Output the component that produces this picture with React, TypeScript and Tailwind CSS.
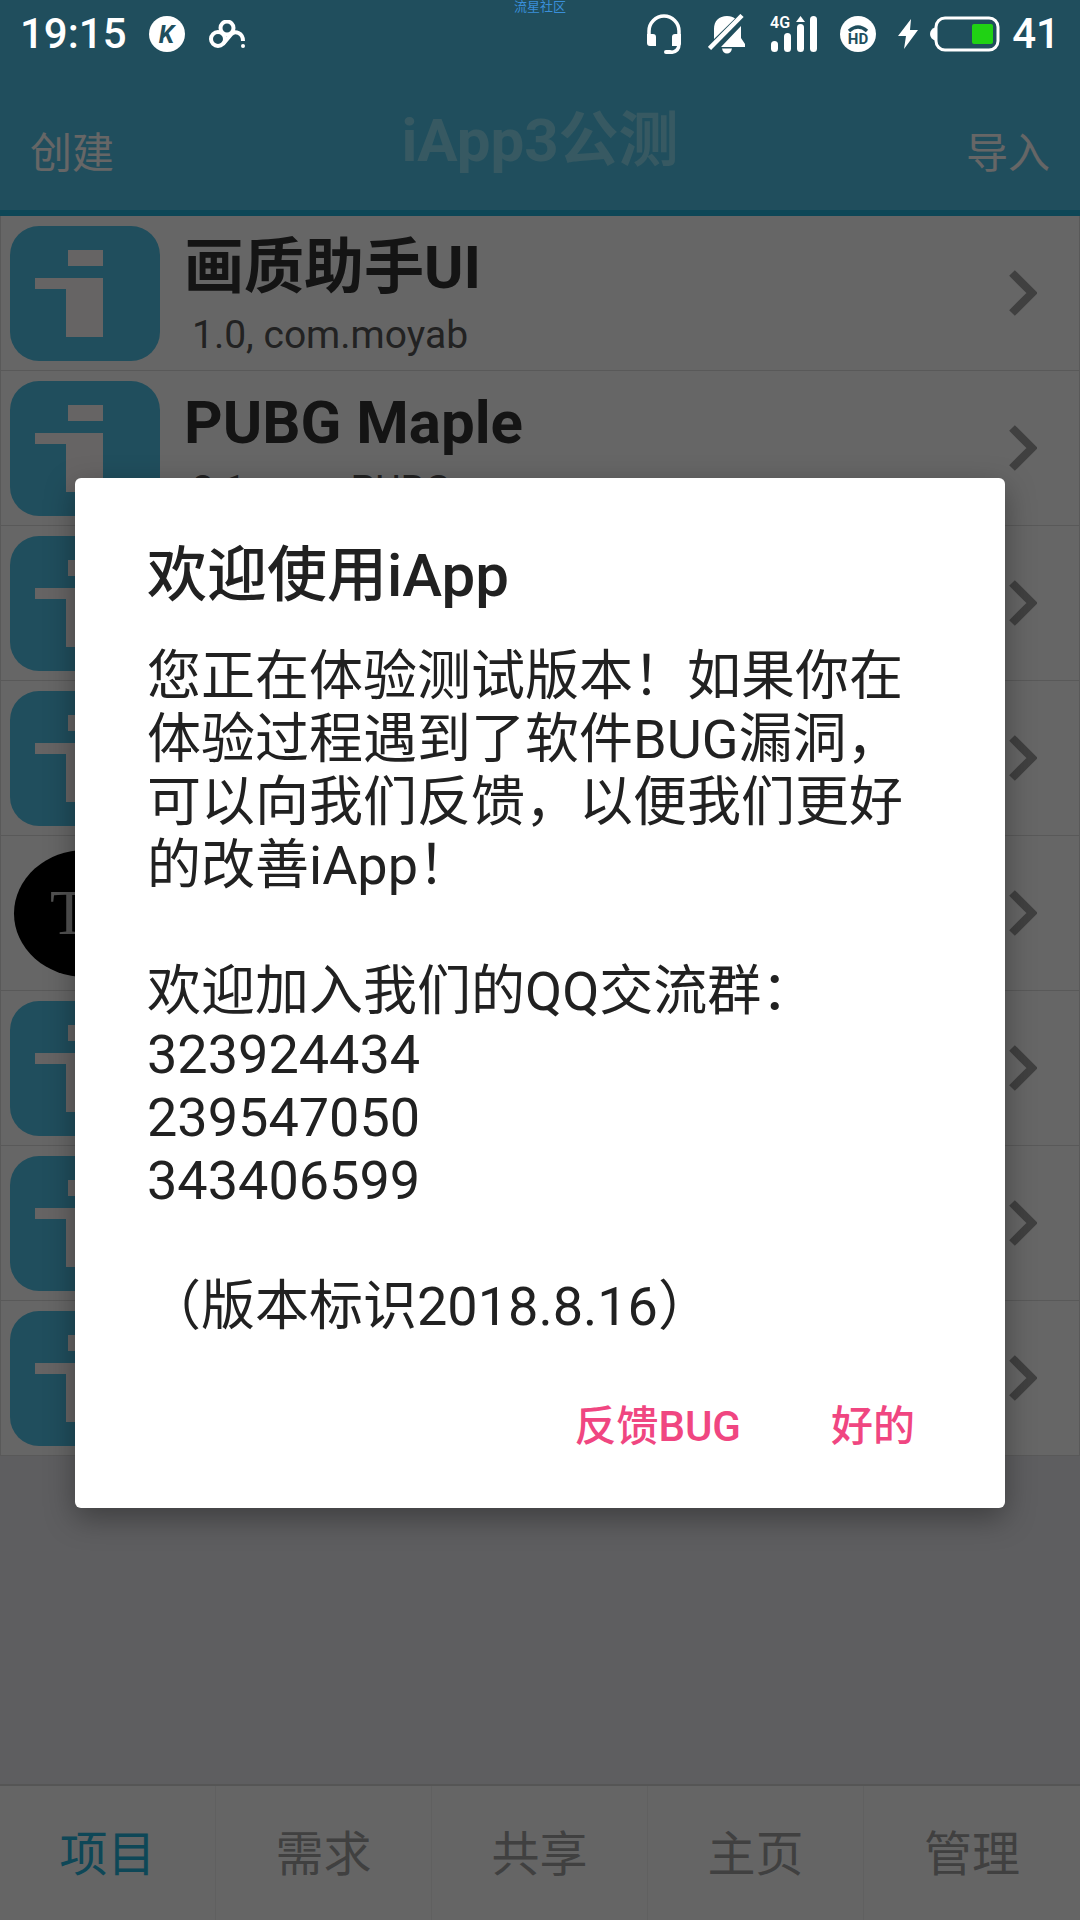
import React, { useState } from "react";

type Project = { id: number; name?: string; info?: string; kind?: "round" };

const projects: Project[] = [
  { id: 1, name: "画质助手UI", info: "1.0, com.moyab" },
  { id: 2, name: "PUBG Maple", info: "2.1, com.PUBG" },
  { id: 3 },
  { id: 4 },
  { id: 5, kind: "round" },
  { id: 6 },
  { id: 7 },
  { id: 8 },
];

const tabs = ["项目", "需求", "共享", "主页", "管理"];

const StatusBar: React.FC = () => (
  <div className="absolute inset-x-0 top-0 z-20 flex h-[68px] items-center justify-between px-5 text-[42px] font-medium leading-none text-white">
    <span className="absolute left-1/2 top-0 -translate-x-1/2 text-[13px] font-normal leading-[13px] text-[#3a8fd9]">
      流星社区
    </span>
    <div className="flex items-center">
      <span>19:15</span>
      <span className="ml-[22px] flex size-9 items-center justify-center rounded-full bg-white text-[25px] font-bold italic leading-none text-[#204e5d]">
        K
      </span>
      <svg className="ml-6 h-7 w-9" viewBox="0 0 36 28" fill="none" stroke="#fff" strokeWidth="4">
        <circle cx="9" cy="19" r="7" />
        <circle cx="18" cy="8" r="6.5" />
        <path d="M14 24L22 14.500C26 10 34 13 34 21" />
        <circle cx="34" cy="26" r="2" fill="#fff" stroke="none" />
      </svg>
    </div>
    <div className="flex items-center">
      <svg className="h-10 w-[34px]" viewBox="0 0 34 40" fill="none">
        <path d="M2 22V17a15 15 0 0 1 30 0V30q0 8-9 8.500" stroke="#fff" strokeWidth="3.500" />
        <path d="M0 20h6q3 0 3 3v9H3q-3 0-3-3zM34 20h-6q-3 0-3 3v9h6q3 0 3-3z" fill="#fff" />
        <rect x="17" y="36" width="8" height="4" rx="2" fill="#fff" />
      </svg>
      <svg className="ml-[27px] h-10 w-[38px]" viewBox="0 0 38 40" fill="#fff">
        <path d="M6 25V15C6 7 11 2 19 2c4 0 6 1 8 2.500zM13 33L33 12V24l4 6v3zM14 34.500h10q-1 5-5 5t-5-5z" />
        <path d="M1.500 34.500L34 1.500" stroke="#fff" strokeWidth="4.500" />
      </svg>
      <svg className="ml-6 h-9 w-12 overflow-visible" viewBox="0 0 48 36" fill="#fff">
        <text x="0" y="12" fontSize="16" fontWeight="600">4G</text>
        <rect x="1" y="25" width="7" height="11" rx="3.500" />
        <rect x="14" y="17" width="7" height="19" rx="3.500" />
        <rect x="27" y="8" width="7" height="28" rx="3.500" />
        <path d="M30.500 0l4.500 6h-9z" />
        <rect x="40" y="0" width="7" height="36" rx="3.500" />
      </svg>
      <svg className="ml-[22px] size-9" viewBox="0 0 36 36">
        <circle cx="18" cy="18" r="18" fill="#fff" />
        <path d="M9 15q9-8 18 0" fill="none" stroke="#204e5d" strokeWidth="3.500" />
        <text x="18" y="28" fontSize="15" fontWeight="700" textAnchor="middle" fill="#204e5d">HD</text>
      </svg>
      <svg className="ml-[22px] h-[30px] w-5" viewBox="0 0 20 30" fill="#fff">
        <path d="M13 0L0 17h8L6 30 20 11h-8z" />
      </svg>
      <svg className="ml-3 h-9 w-[70px]" viewBox="0 0 70 36">
        <path d="M6 11q-6 2-6 7t6 7z" fill="#fff" />
        <rect x="6" y="2" width="62" height="32" rx="9" fill="none" stroke="#fff" strokeWidth="3" />
        <rect x="42" y="8" width="21" height="20" rx="2" fill="#20d214" />
      </svg>
      <span className="ml-3">41</span>
    </div>
  </div>
);

const ProjectIcon: React.FC<{ kind?: "round" }> = ({ kind }) =>
  kind === "round" ? (
    <span className="mx-1 flex h-[127px] w-[142px] items-center rounded-[50%] bg-black pl-9 font-[Liberation_Serif,serif] text-[63px] text-[#ccc]">
      T
    </span>
  ) : (
    <svg className="h-[135px] w-[150px]" viewBox="0 0 150 135">
      <rect width="150" height="135" rx="29" fill="#50c3e8" />
      <path d="M58 24h35v16H58zM25 52h68v59H56V63H25z" fill="#fffafa" />
    </svg>
  );

const ProjectRow: React.FC<{ project: Project }> = ({ project }) => (
  <li className="flex h-[155px] items-center border-x border-b border-[#dedede] bg-white pl-[9px] pr-[42px]">
    <ProjectIcon kind={project.kind} />
    <div className="ml-6 flex-1">
      <h2 className="text-[60px] font-bold leading-[84px] text-[#333]">{project.name}</h2>
      <p className="pl-2 text-[39px] leading-[50px] text-[#555]">{project.info}</p>
    </div>
    <svg className="h-12 w-7" viewBox="0 0 28 48" fill="none">
      <path d="M3 4l20 20L3 44" stroke="#a0a0a0" strokeWidth="8" />
    </svg>
  </li>
);

const WelcomeDialog: React.FC<{ onClose: () => void }> = ({ onClose }) => (
  <div className="absolute inset-0 z-10 flex items-center justify-center bg-black/60 px-[75px] pt-[66px]">
    <div
      role="dialog"
      aria-modal="true"
      aria-labelledby="welcome-title"
      className="w-full rounded-md bg-white px-[72px] pb-10 pt-[62px] text-[#212121] shadow-[0_10px_30px_rgba(0,0,0,0.35)]"
    >
      <h2 id="welcome-title" className="text-[60px] font-medium leading-[72px]">
        欢迎使用iApp
      </h2>
      <div className="mt-[33px] text-[54px] leading-[63px]">
        <p>您正在体验测试版本！如果你在体验过程遇到了软件BUG漏洞，可以向我们反馈，以便我们更好的改善iApp！</p>
        <p className="mt-[63px]">
          欢迎加入我们的QQ交流群：
          <br />
          323924434
          <br />
          239547050
          <br />
          343406599
        </p>
        <p className="mt-[63px]">（版本标识2018.8.16）</p>
      </div>
      <div className="mt-[46px] flex justify-end gap-5 text-[42px] font-medium text-[#f04681]">
        <button type="button" onClick={onClose} className="h-[84px] px-[35px]">
          反馈BUG
        </button>
        <button type="button" onClick={onClose} className="h-[84px] pl-[35px] pr-[18px]">
          好的
        </button>
      </div>
    </div>
  </div>
);

export default function App() {
  const [open, setOpen] = useState(true);
  const [active, setActive] = useState("项目");

  return (
    <div className="relative flex min-h-screen flex-col bg-[#ebebf0] font-[Roboto,'Noto_Sans_CJK_SC',sans-serif]">
      <StatusBar />

      <header className="flex items-center justify-between border-b-6 border-[#25b2da] bg-[#50c3e8] px-[30px] pt-[66px] text-[42px] text-white">
        <button type="button" className="pt-[30px]">创建</button>
        <h1 className="h-[144px] pt-9 text-[60px] font-bold leading-[78px] text-[#8adff5]">iApp3公测</h1>
        <button type="button" className="pt-[30px]">导入</button>
      </header>

      <ul className="flex-1">
        {projects.map((p) => (
          <ProjectRow key={p.id} project={p} />
        ))}
      </ul>

      <nav className="grid h-[136px] grid-cols-5 border-t-2 border-[#d4d4d4] bg-[#fdfdfd]">
        {tabs.map((t) => (
          <button
            key={t}
            type="button"
            onClick={() => setActive(t)}
            className={`border-r border-[#f0f0f0] pt-1 text-[48px] last:border-r-0 ${
              t === active ? "text-[#25b2da]" : "text-[#a0a0a0]"
            }`}
          >
            {t}
          </button>
        ))}
      </nav>

      {open && <WelcomeDialog onClose={() => setOpen(false)} />}
    </div>
  );
}
